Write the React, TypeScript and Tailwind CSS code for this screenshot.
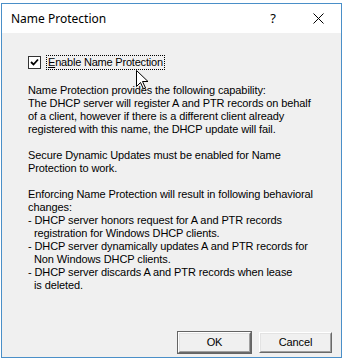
import React from "react";

const body = "font-['Liberation_Sans',Arial,sans-serif] text-[11px] leading-[13px] tracking-[-0.1px] text-black";

function Cursor() {
  return (
    <svg
      className="absolute left-[136px] top-[70px]"
      width="13"
      height="20"
      viewBox="0 0 13 20"
    >
      <path
        d="M0.5 0.5 L0.5 16.5 L4.5 12.5 L7.5 19 L9.5 18 L6.5 11.5 L12 11.5 Z"
        fill="#fff"
        stroke="#000"
        strokeWidth="1"
        strokeLinejoin="miter"
      />
    </svg>
  );
}

function ClassicButton({ label, isDefault }: { label: string; isDefault?: boolean }) {
  return (
    <div
      className={`${
        isDefault ? "border-[#646464]" : "border-[#f0f0f0]"
      } w-[75px] h-[23px] border`}
    >
      <div className="w-full h-full border border-t-white border-l-white border-r-[#696969] border-b-[#696969]">
        <div className={`${body} w-full h-full border border-t-[#e3e3e3] border-l-[#e3e3e3] border-r-[#a0a0a0] border-b-[#a0a0a0] bg-[#f0f0f0] flex items-center justify-center`}>
          {label}
        </div>
      </div>
    </div>
  );
}

export default function App() {
  return (
    <div className="w-[343px] h-[360px] bg-white relative overflow-hidden pt-[3px] pl-[1px]">
      {/* dialog window */}
      <div className="w-[341px] h-[355px] border border-[#4a8fc8] flex flex-col">
        {/* title bar */}
        <div className="h-[29px] bg-white flex items-center pl-[9px] pr-[17px] leading-none">
          <span className="flex-1 font-['Noto_Sans',sans-serif] text-[12px] text-black">
            Name Protection
          </span>
          <span className="font-['Noto_Sans',sans-serif] text-[13px] text-black mr-[37px]">?</span>
          <svg width="11" height="11" viewBox="0 0 11 11">
            <path d="M0.5 0.5 L10.5 10.5 M10.5 0.5 L0.5 10.5" stroke="#000" strokeWidth="1" />
          </svg>
        </div>

        {/* body */}
        <div className={`${body} flex-1 bg-[#f0f0f0] flex flex-col pl-[26px] pr-[8px] pt-[22px] pb-[3px]`}>
          <div className="flex items-center gap-[5px] h-[15px]">
            <div className="w-[13px] h-[13px] border border-[#333] bg-white flex items-center justify-center">
              <svg width="9" height="9" viewBox="0 0 9 9">
                <path d="M1 4 L3.5 6.5 L8 1.5" stroke="#000" strokeWidth="1.8" fill="none" />
              </svg>
            </div>
            <div className="border border-dotted border-black px-[1px] h-[15px] leading-[13px] tracking-[-0.2px]">
              <span className="underline">E</span>nable Name Protection
            </div>
          </div>

          <div className="mt-[14px] flex flex-col">
            <p>Name Protection provides the following capability:</p>
            <p>The DHCP server will register A and PTR records on behalf</p>
            <p>of a client, however if there is a different client already</p>
            <p>registered with this name, the DHCP update will fail.</p>
            <p className="mt-[13px]">Secure Dynamic Updates must be enabled for Name</p>
            <p>Protection to work.</p>
            <p className="mt-[13px]">Enforcing Name Protection will result in following behavioral</p>
            <p>changes:</p>
            <p>- DHCP server honors request for A and PTR records</p>
            <p className="pl-[6px]">registration for Windows DHCP clients.</p>
            <p>- DHCP server dynamically updates A and PTR records for</p>
            <p className="pl-[6px]">Non Windows DHCP clients.</p>
            <p>- DHCP server discards A and PTR records when lease</p>
            <p className="pl-[6px]">is deleted.</p>
          </div>

          <div className="mt-auto flex justify-end gap-[6px]">
            <ClassicButton label="OK" isDefault />
            <ClassicButton label="Cancel" />
          </div>
        </div>
      </div>
      <Cursor />
    </div>
  );
}
